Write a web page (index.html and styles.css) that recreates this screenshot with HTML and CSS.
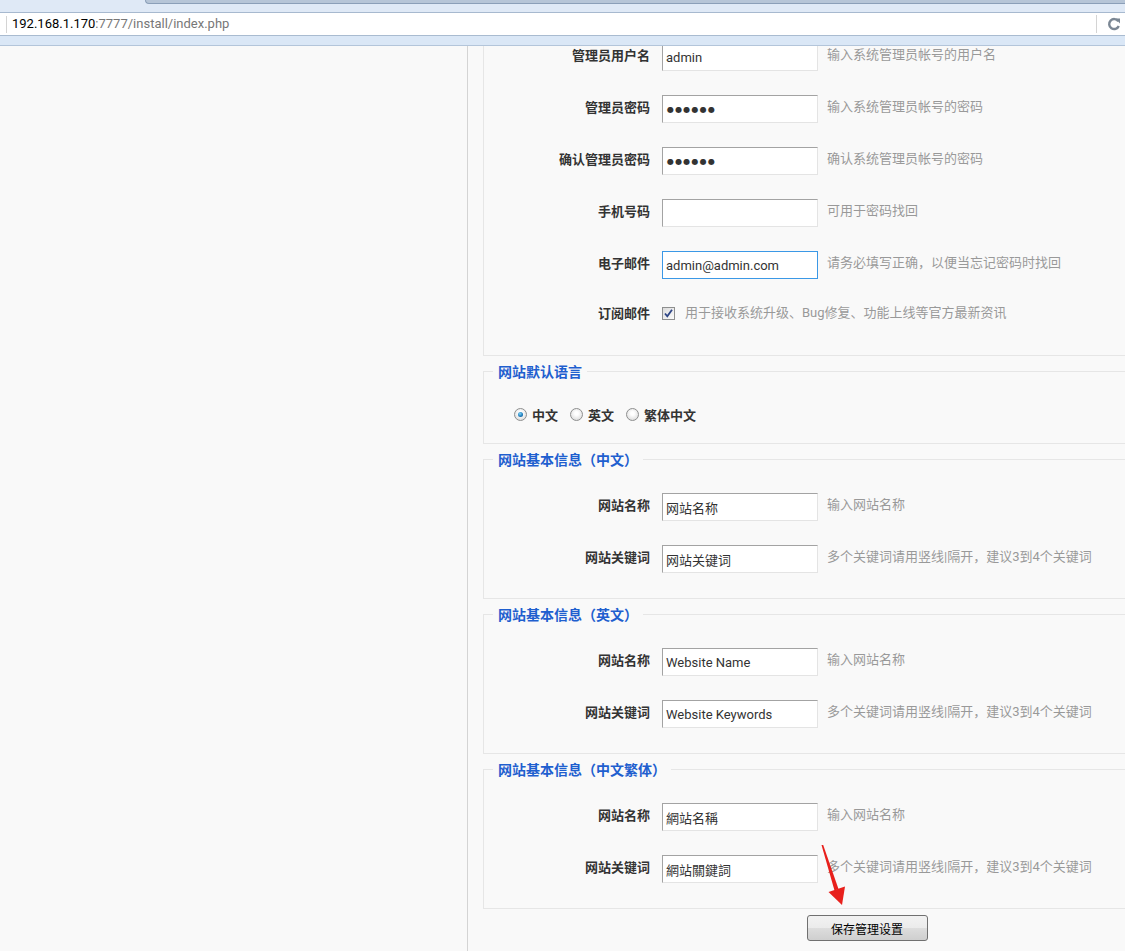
FILE: index.html
```html
<!DOCTYPE html>
<html lang="zh-CN">
<head>
<meta charset="utf-8">
<title>install</title>
<link rel="stylesheet" href="styles.css">
</head>
<body>
<div class="chrome">
  <div class="tabstrip"><div class="tab"></div></div>
  <div class="addr">
    <span class="sep"></span>
    <span class="url"><span class="host">192.168.1.170</span>:7777/install/index.php</span>
    <span class="sep2"></span>
    <svg class="reload" width="14" height="14" viewBox="0 0 14 14"><path d="M11.3 4.2 A5 5 0 1 0 11.8 9" fill="none" stroke="#7b8794" stroke-width="2.4"/><path d="M8.2 1.6 L13 1.6 L13 6.4 Z" fill="#7b8794"/></svg>
  </div>
  <div class="toolbar"></div>
</div>

<div class="main">
  <div class="side"></div>
  <div class="content">
    <fieldset class="box first">
      <div class="row"><span class="label">管理员用户名</span><span class="field">admin</span><span class="hint">输入系统管理员帐号的用户名</span></div>
      <div class="row"><span class="label">管理员密码</span><span class="field dots">●●●●●●</span><span class="hint">输入系统管理员帐号的密码</span></div>
      <div class="row"><span class="label">确认管理员密码</span><span class="field dots">●●●●●●</span><span class="hint">确认系统管理员帐号的密码</span></div>
      <div class="row"><span class="label">手机号码</span><span class="field"></span><span class="hint">可用于密码找回</span></div>
      <div class="row"><span class="label">电子邮件</span><span class="field focus">admin@admin.com</span><span class="hint">请务必填写正确，以便当忘记密码时找回</span></div>
      <div class="row short"><span class="label">订阅邮件</span><span class="check"><svg width="11" height="11" viewBox="0 0 11 11"><path d="M2 5.5 L4.3 8.3 L9 1.8" fill="none" stroke="#2e4585" stroke-width="1.8"/></svg></span><span class="hint muted">用于接收系统升级、Bug修复、功能上线等官方最新资讯</span></div>
    </fieldset>

    <fieldset class="box lang">
      <legend>网站默认语言</legend>
      <div class="radios">
        <span class="radio on"></span><span class="rlabel">中文</span>
        <span class="radio"></span><span class="rlabel">英文</span>
        <span class="radio"></span><span class="rlabel">繁体中文</span>
      </div>
    </fieldset>

    <fieldset class="box">
      <legend>网站基本信息（中文）</legend>
      <div class="row"><span class="label">网站名称</span><span class="field">网站名称</span><span class="hint">输入网站名称</span></div>
      <div class="row"><span class="label">网站关键词</span><span class="field">网站关键词</span><span class="hint">多个关键词请用竖线|隔开，建议3到4个关键词</span></div>
    </fieldset>

    <fieldset class="box">
      <legend>网站基本信息（英文）</legend>
      <div class="row"><span class="label">网站名称</span><span class="field">Website Name</span><span class="hint">输入网站名称</span></div>
      <div class="row"><span class="label">网站关键词</span><span class="field">Website Keywords</span><span class="hint">多个关键词请用竖线|隔开，建议3到4个关键词</span></div>
    </fieldset>

    <fieldset class="box">
      <legend>网站基本信息（中文繁体）</legend>
      <div class="row"><span class="label">网站名称</span><span class="field">網站名稱</span><span class="hint">输入网站名称</span></div>
      <div class="row"><span class="label">网站关键词</span><span class="field">網站關鍵詞</span><span class="hint">多个关键词请用竖线|隔开，建议3到4个关键词</span></div>
    </fieldset>

    <div class="actions"><button class="btn" type="button">保存管理设置</button></div>
  </div>
</div>

<svg class="arrow" width="1125" height="951" viewBox="0 0 1125 951">
  <polygon points="821.5,845 823.2,845 838.5,889 834.5,890.5" fill="#e8201c"/>
  <polygon points="828.5,892 845,886.5 842,905" fill="#e8201c"/>
</svg>
</body>
</html>
```

FILE: styles.css
```css
html, body {
  margin: 0;
  padding: 0;
}
body {
  background: #f9f9f9;
  overflow: hidden;
  width: 1125px;
  height: 951px;
  font-family: Roboto, "Noto Sans CJK SC", sans-serif;
  font-size: 13px;
  color: #333;
}

/* browser chrome */
.chrome {
  background: #dfe9f6;
}
.tabstrip {
  height: 12px;
  border-bottom: 1px solid #a7b9cf;
  background: #dfe9f6;
}
.tab {
  margin-left: 145px;
  height: 3px;
  background: #b6c5d7;
  border: 1px solid #8b9fb8;
  border-top: none;
  border-right: none;
  border-bottom-left-radius: 9px;
}
.addr {
  height: 22px;
  background: #fff;
  border-bottom: 1px solid #a9bbd0;
  display: flex;
  align-items: center;
}
.sep {
  width: 1px;
  height: 17px;
  background: #d4d4d4;
  margin-left: 6px;
  margin-right: 5px;
}
.url {
  color: #777;
  font-size: 13px;
  font-family: Roboto, sans-serif;
  flex: 1;
  line-height: 22px;
}
.host {
  color: #000;
}
.sep2 {
  width: 1px;
  height: 18px;
  background: #d4d4d4;
  margin-right: 10px;
}
.reload {
  margin-right: 4px;
}
.toolbar {
  height: 9px;
  background: #dae7f6;
  border-bottom: 1px solid #b3c5da;
}

/* page */
.main {
  display: flex;
  height: 905px;
  overflow: hidden;
}
.side {
  width: 467px;
  flex: none;
  border-right: 1px solid #d4d4d4;
}
.content {
  width: 798px;
  flex: none;
  padding: 0 15px;
  box-sizing: border-box;
}
.box {
  margin: 5px 0 0;
  padding: 23px 0 25px;
  border: 1px solid #e6e6e6;
  min-width: 0;
}
.box legend {
  margin-left: 9px;
  padding: 0 5px;
  font-weight: bold;
  font-size: 14px;
  line-height: 21px;
  color: #1f5fcf;
  font-family: "Noto Sans CJK SC", sans-serif;
}
.box.first {
  margin-top: -30px;
  padding: 26px 0 32px;
}
.box.lang {
  padding: 22px 0 19px;
}

.row {
  display: flex;
  align-items: center;
  height: 28px;
  margin-bottom: 24px;
}
.row:last-child {
  margin-bottom: 0;
}
.row.short {
  height: 20px;
}
.label {
  width: 166px;
  margin-right: 12px;
  flex: none;
  text-align: right;
  font-weight: bold;
  color: #333;
  font-family: "Noto Sans CJK SC", sans-serif;
  line-height: 20px;
  padding-bottom: 5px;
}
.field {
  width: 156px;
  height: 28px;
  flex: none;
  box-sizing: border-box;
  border: 1px solid;
  border-color: #a3a3a3 #e4e4e4 #e4e4e4 #a3a3a3;
  background: #fff;
  padding: 0 3px;
  display: flex;
  align-items: center;
  font-size: 13px;
  color: #333;
  white-space: nowrap;
  overflow: hidden;
}
.field.focus {
  border-color: #3b98e6;
}
.field.dots {
  font-family: "DejaVu Sans", sans-serif;
  font-size: 8px;
  letter-spacing: 1.2px;
  color: #333;
  padding-left: 4px;
}
.hint {
  margin-left: 9px;
  color: #999;
  font-size: 13px;
  white-space: nowrap;
  font-family: Roboto, "Noto Sans CJK SC", sans-serif;
  line-height: 20px;
  padding-bottom: 5px;
}
.row.short .label,
.row.short .hint {
  padding-bottom: 0;
}
.hint.muted {
  margin-left: 10px;
}
.check {
  width: 13px;
  height: 13px;
  box-sizing: border-box;
  border: 1px solid #8e8f8f;
  background: linear-gradient(135deg, #dcdcdc, #fbfbfb);
  display: flex;
  align-items: center;
  justify-content: center;
  flex: none;
}

.radios {
  display: flex;
  align-items: center;
  height: 20px;
  padding-left: 30px;
}
.radio {
  width: 13px;
  height: 13px;
  box-sizing: border-box;
  border-radius: 50%;
  border: 1px solid #8e8f8f;
  background: radial-gradient(circle at 50% 40%, #ffffff 20%, #d2d2d2 100%);
  margin-right: 5px;
  position: relative;
  flex: none;
}
.radio.on::after {
  content: "";
  position: absolute;
  left: 3px;
  top: 3px;
  width: 5px;
  height: 5px;
  border-radius: 50%;
  background: radial-gradient(circle at 40% 35%, #7fd4f7 0%, #1b78b8 60%, #0d4f85 100%);
}
.rlabel {
  font-weight: bold;
  color: #333;
  margin-right: 12px;
  font-family: "Noto Sans CJK SC", sans-serif;
}

.actions {
  text-align: center;
  padding-top: 6px;
}
.btn {
  width: 121px;
  height: 26px;
  border: 1px solid #707070;
  border-radius: 3px;
  background: linear-gradient(#f2f2f2 0%, #ebebeb 50%, #dddddd 50%, #cfcfcf 100%);
  font-family: "Noto Sans CJK SC", sans-serif;
  font-size: 12px;
  color: #000;
  padding: 0;
}

.arrow {
  position: absolute;
  left: 0;
  top: 0;
  pointer-events: none;
}
```
